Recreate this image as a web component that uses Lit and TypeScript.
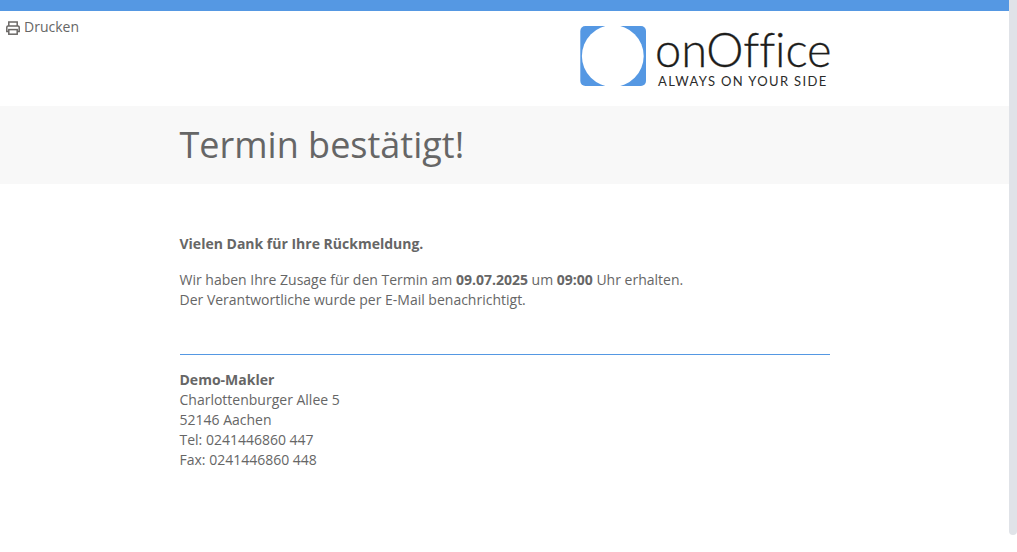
import { LitElement, html, css } from "lit";
import { customElement } from "lit/decorators.js";

@customElement("app-root")
export class AppRoot extends LitElement {
  static styles = css`
    :host {
      display: flex;
      height: 552px;
      overflow: hidden;
      background: #fff;
      font-family: "Open Sans", sans-serif;
      font-size: 14px;
      line-height: 20px;
      color: #666;
    }
    .main { flex: 1; min-width: 0; }
    .bar { height: 11px; background: #5598e3; }
    .head { height: 95px; display: flex; align-items: flex-start; }
    .print {
      flex: none;
      width: 574px;
      box-sizing: border-box;
      display: flex; align-items: center; gap: 4px;
      margin: 6px 0 0 6px;
    }
    .print svg { display: block; flex: none; margin-top: 1px; }
    .logo {
      margin-top: 15px;
      width: 250px; height: 60px;
      display: flex; gap: 9px;
    }
    .mark { display: block; flex: none; }
    .brand { display: flex; flex-direction: column; color: #1d1d1b; }
    .name {
      font-family: Lato, sans-serif;
      font-weight: 300;
      font-size: 47px;
      line-height: 47px;
      height: 47px;
      letter-spacing: -0.1px;
      -webkit-text-stroke: 0.3px #1d1d1b;
      white-space: nowrap;
    }
    .tag {
      font-family: Lato, sans-serif;
      font-size: 13px;
      line-height: 14px;
      letter-spacing: 1.35px;
      white-space: nowrap;
      margin: 1px 0 0 3px;
      color: #2b2b2a;
    }
    .band { height: 78px; background: #f8f8f8; padding-left: 179.5px; }
    h1 {
      margin: 0;
      font-weight: 400;
      font-size: 36px;
      line-height: 78px;
      color: #666;
    }
    .content { width: 650px; margin-left: 179.5px; padding-top: 50px; }
    p { margin: 0 0 16px; }
    .rule { border-top: 1px solid #5598e3; margin: 44px 0 15px; }
    .scroll { flex: none; width: 8px; height: 535px; background: #e0e3e8; border-radius: 0 0 4px 4px; }
  `;

  render() {
    return html`
      <div class="main">
        <div class="bar"></div>
        <div class="head">
          <div class="print">
            <svg width="14" height="14" viewBox="0 0 14 14" fill="none" stroke="#6b6866" stroke-width="1.5">
              <path d="M2.8 5V1h8.4v4" />
              <path d="M2.8 10.5H.8V6.2A1.2 1.2 0 0 1 2 5h10a1.2 1.2 0 0 1 1.2 1.2v4.3h-2" />
              <rect x="2.8" y="8.6" width="8.4" height="4.6" />
            </svg>
            <span>Drucken</span>
          </div>
          <div class="logo">
            <svg class="mark" width="66" height="60" viewBox="0 0 66 60">
              <rect x="0.3" width="65.7" height="60" rx="5" fill="#5598e3" />
              <circle cx="32.8" cy="30" r="30.9" fill="#fff" />
            </svg>
            <div class="brand">
              <div class="name">onOffice</div>
              <div class="tag">ALWAYS ON YOUR SIDE</div>
            </div>
          </div>
        </div>
        <div class="band"><h1>Termin bestätigt!</h1></div>
        <div class="content">
          <p><b>Vielen Dank für Ihre Rückmeldung.</b></p>
          <p>Wir haben Ihre Zusage für den Termin am <b>09.07.2025</b> um <b>09:00</b> Uhr erhalten.<br />Der Verantwortliche wurde per E-Mail benachrichtigt.</p>
          <div class="rule"></div>
          <div>
            <b>Demo-Makler</b><br />
            Charlottenburger Allee 5<br />
            52146 Aachen<br />
            Tel: 0241446860 447<br />
            Fax: 0241446860 448
          </div>
        </div>
      </div>
      <div class="scroll"></div>
    `;
  }
}
